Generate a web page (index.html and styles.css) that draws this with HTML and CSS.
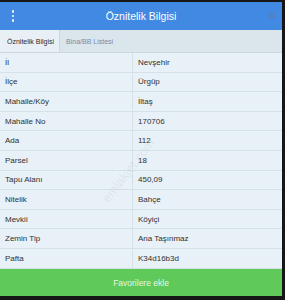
FILE: index.html
```html
<!DOCTYPE html>
<html lang="tr">
<head>
<meta charset="utf-8">
<link rel="stylesheet" href="styles.css">
</head>
<body>
<div class="modal">
  <header class="head">
    <span class="kebab"><i></i><i></i><i></i></span>
    <h1 class="title">Öznitelik Bilgisi</h1>
    <span class="close">✕</span>
  </header>
  <nav class="tabs">
    <span class="tab active">Öznitelik Bilgisi</span>
    <span class="tab">Bina/BB Listesi</span>
  </nav>
  <div class="table">
    <div class="row"><span class="k">İl</span><span class="v">Nevşehir</span></div>
    <div class="row"><span class="k">İlçe</span><span class="v">Ürgüp</span></div>
    <div class="row"><span class="k">Mahalle/Köy</span><span class="v">İltaş</span></div>
    <div class="row"><span class="k">Mahalle No</span><span class="v">170706</span></div>
    <div class="row"><span class="k">Ada</span><span class="v">112</span></div>
    <div class="row"><span class="k">Parsel</span><span class="v">18</span></div>
    <div class="row"><span class="k">Tapu Alanı</span><span class="v">450,09</span></div>
    <div class="row"><span class="k">Nitelik</span><span class="v">Bahçe</span></div>
    <div class="row"><span class="k">Mevkii</span><span class="v">Köyiçi</span></div>
    <div class="row"><span class="k">Zemin Tip</span><span class="v">Ana Taşınmaz</span></div>
    <div class="row"><span class="k">Pafta</span><span class="v">K34d16b3d</span></div>
    <span class="wm">emlakjet.com</span>
  </div>
  <button class="fav">Favorilere ekle</button>
</div>
</body>
</html>
```
FILE: styles.css
```css
html, body {
  margin: 0;
  padding: 0;
  background: #161616;
  width: 285px;
  height: 300px;
  overflow: hidden;
  font-family: "Liberation Sans", Arial, sans-serif;
}
.modal {
  margin-top: 2px;
  width: 282px;
  height: 294px;
  display: flex;
  flex-direction: column;
  background: #e8f1f7;
}
.head {
  height: 28px;
  background: #4189e2;
  display: flex;
  align-items: center;
  position: relative;
}
.kebab {
  width: 26px;
  display: flex;
  flex-direction: column;
  align-items: center;
  gap: 2px;
}
.kebab i {
  width: 2.5px;
  height: 2.5px;
  border-radius: 50%;
  background: #ffffff;
}
.title {
  flex: 1;
  margin: 0;
  text-align: center;
  color: #ffffff;
  font-weight: normal;
  font-size: 10.5px;
  margin-right: 26px;
}
.close {
  position: absolute;
  right: 6px;
  top: 8px;
  color: #5b7fb3;
  font-size: 10px;
  font-weight: bold;
  line-height: 12px;
}
.tabs {
  height: 22px;
  background: #dbe5ec;
  border-bottom: 1px solid #cdd7de;
  display: flex;
  align-items: stretch;
  font-size: 7px;
  white-space: nowrap;
}
.tab {
  display: flex;
  align-items: center;
  padding: 0 6px;
  color: #7a8aa6;
}
.tab.active {
  padding: 0 5px 0 7px;
  color: #2b2b2b;
  background: #e9f0f5;
  border-right: 1px solid #cdd7de;
}
.table {
  flex: 1;
  display: flex;
  flex-direction: column;
  position: relative;
  overflow: hidden;
}
.row {
  height: 19.6px;
  display: grid;
  grid-template-columns: 133px 1fr;
  border-bottom: 1px solid #d6e0e7;
  box-sizing: border-box;
  font-size: 8px;
  color: #303030;
  background: #e8f1f7;
}
.row span {
  display: flex;
  align-items: center;
}
.k {
  padding-left: 5px;
  border-right: 1px solid #d6e0e7;
}
.v {
  padding-left: 5px;
}
.wm {
  position: absolute;
  left: 90px;
  top: 110px;
  font-size: 13px;
  color: rgba(160, 160, 160, 0.16);
  transform: rotate(-52deg);
  pointer-events: none;
}
.fav {
  height: 27px;
  border: none;
  margin: 0;
  padding: 0;
  background: #5fca5a;
  color: #e6f5e4;
  font-family: "Liberation Sans", Arial, sans-serif;
  font-size: 8.5px;
}
```
